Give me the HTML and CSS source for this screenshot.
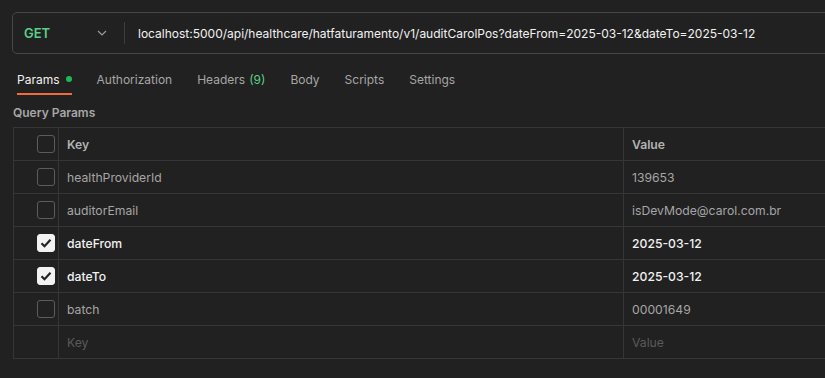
FILE: index.html
```html
<!DOCTYPE html>
<html lang="en">

<head>
    <meta charset="UTF-8">
    <meta name="viewport" content="width=device-width, initial-scale=1.0">
    <title>Request</title>
    <link rel="stylesheet" href="styles.css">
</head>

<body>
    <div class="url-bar">
        <div class="method">
            <span class="method-name">GET</span>
            <svg class="chevron" width="10" height="6" viewBox="0 0 10 6">
                <path d="M1 1l4 4 4-4" fill="none" stroke="#9a9a9a" stroke-width="1.2" />
            </svg>
        </div>
        <div class="url">localhost:5000/api/healthcare/hatfaturamento/v1/auditCarolPos?dateFrom=2025-03-12&amp;dateTo=2025-03-12</div>
    </div>

    <div class="tabs">
        <div class="tab active">Params <span class="dot"></span></div>
        <div class="tab">Authorization</div>
        <div class="tab">Headers <span class="count">(9)</span></div>
        <div class="tab">Body</div>
        <div class="tab">Scripts</div>
        <div class="tab">Settings</div>
    </div>

    <div class="section-title">Query Params</div>

    <table class="params">
        <tr class="head">
            <td class="check"><span class="box"></span></td>
            <td class="key">Key</td>
            <td class="value">Value</td>
        </tr>
        <tr>
            <td class="check"><span class="box"></span></td>
            <td class="key">healthProviderId</td>
            <td class="value">139653</td>
        </tr>
        <tr>
            <td class="check"><span class="box"></span></td>
            <td class="key">auditorEmail</td>
            <td class="value">isDevMode@carol.com.br</td>
        </tr>
        <tr class="on">
            <td class="check"><span class="box checked"><svg width="12" height="10" viewBox="0 0 12 10"><path d="M1.5 5.2l3 3 6-6.4" fill="none" stroke="#212121" stroke-width="2.2" /></svg></span></td>
            <td class="key">dateFrom</td>
            <td class="value">2025-03-12</td>
        </tr>
        <tr class="on">
            <td class="check"><span class="box checked"><svg width="12" height="10" viewBox="0 0 12 10"><path d="M1.5 5.2l3 3 6-6.4" fill="none" stroke="#212121" stroke-width="2.2" /></svg></span></td>
            <td class="key">dateTo</td>
            <td class="value">2025-03-12</td>
        </tr>
        <tr>
            <td class="check"><span class="box"></span></td>
            <td class="key">batch</td>
            <td class="value">00001649</td>
        </tr>
        <tr class="empty">
            <td class="check"></td>
            <td class="key">Key</td>
            <td class="value">Value</td>
        </tr>
    </table>
</body>

</html>
```

FILE: styles.css
```css
html,
body {
    height: 100%;
}

body {
    margin: 0;
    overflow: hidden;
    background-color: #212121;
    font-family: Inter, 'Noto Sans', sans-serif;
    font-size: 12px;
    color: #a6a6a6;
}

.url-bar {
    display: flex;
    align-items: center;
    height: 40px;
    margin: 12px -20px 0 12px;
    border: 1px solid #474747;
    border-radius: 5px;
}

.method {
    display: flex;
    align-items: center;
    justify-content: space-between;
    width: 83px;
    height: 22px;
    padding: 0 17px 0 11px;
    border-right: 1px solid #3d3d3d;
}

.method-name {
    color: #5bcf8a;
    font-size: 13px;
    font-weight: 600;
}

.url {
    padding-left: 13px;
    font-size: 12px;
    color: #f2f2f2;
    white-space: nowrap;
}

.tabs {
    display: flex;
    margin: 11px 0 0 17px;
}

.tab {
    display: flex;
    align-items: center;
    height: 28px;
    margin-right: 25px;
    border-bottom: 2px solid transparent;
    font-size: 12px;
    color: #a6a6a6;
}

.tab.active {
    color: #f2f2f2;
    border-bottom-color: #f26b3a;
}

.dot {
    display: inline-block;
    width: 6px;
    height: 6px;
    margin-left: 6px;
    border-radius: 50%;
    background-color: #1db954;
}

.count {
    margin-left: 4px;
    color: #5bcf8a;
}

.section-title {
    margin: 10px 0 0 13px;
    font-size: 12px;
    font-weight: 600;
    color: #a6a6a6;
}

.params {
    margin: 7px 0 0 13px;
    width: calc(100% + 10px);
    border-collapse: collapse;
    border-spacing: 0;
}

.params td {
    height: 32px;
    padding: 0;
    border: 1px solid #363636;
    vertical-align: middle;
    white-space: nowrap;
    font-size: 12.2px;
}

.params .check {
    width: 44px;
    text-align: right;
}

.params .key {
    width: 556px;
    padding-left: 8px;
}

.params .value {
    padding-left: 8px;
}

.box {
    display: inline-flex;
    align-items: center;
    justify-content: center;
    width: 16px;
    height: 16px;
    margin-right: 3px;
    border: 1px solid #5c5c5c;
    border-radius: 3px;
    vertical-align: middle;
}

.box.checked {
    background-color: #f2f2f2;
    border-color: #f2f2f2;
}

.head td {
    font-weight: 600;
    color: #b3b3b3;
}

.on td {
    color: #f2f2f2;
    font-weight: 500;
}

.empty td {
    color: #5a5a5a;
}
```
